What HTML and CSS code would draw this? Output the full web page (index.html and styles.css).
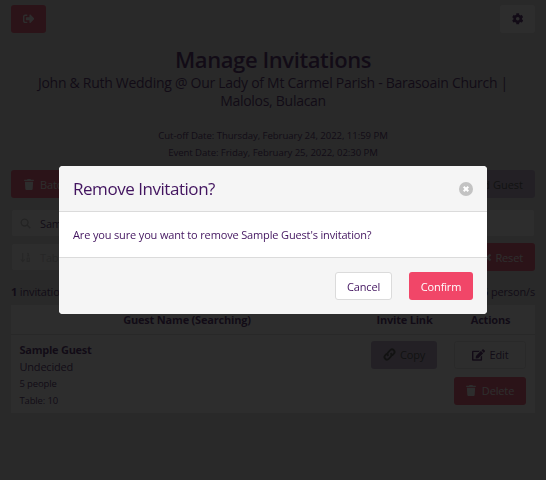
FILE: index.html
```html
<!DOCTYPE html>
<html lang="en">
<head>
<meta charset="utf-8">
<title>Manage Invitations</title>
<link rel="stylesheet" href="styles.css">
</head>
<body>
<svg class="defs" aria-hidden="true">
  <symbol id="trash" viewBox="0 0 448 512"><path d="M32 128h384l-22 340a46 46 0 0 1-46 44H100a46 46 0 0 1-46-44zM432 32H312l-10-19A24 24 0 0 0 281 0H167a24 24 0 0 0-21 13l-10 19H16A16 16 0 0 0 0 48v32a16 16 0 0 0 16 16h416a16 16 0 0 0 16-16V48a16 16 0 0 0-16-16z"/></symbol>
</svg>
<main class="page">
  <div class="row nav">
    <button class="btn danger icon-only"><svg class="i-out" viewBox="0 0 512 512"><path d="M497 273 329 441c-15 15-41 4.500-41-17v-96H152c-13 0-24-11-24-24v-96c0-13 11-24 24-24h136V88c0-21 26-32 41-17l168 168c9 9 9 25 0 34zM192 436v-40c0-7-5-12-12-12H96c-18 0-32-14-32-32V160c0-18 14-32 32-32h84c7 0 12-5 12-12V76c0-7-5-12-12-12H96C43 64 0 107 0 160v192c0 53 43 96 96 96h84c7 0 12-5 12-12z"/></svg></button>
    <button class="btn plain icon-only"><svg class="i-cog" viewBox="0 0 512 512"><path d="M487 316l-42-25c4-23 4-47 0-70l42-25c5-3 7-9 6-14-12-36-31-68-55-95-4-4-10-5-15-2l-43 25c-18-15-39-27-61-35V26c0-6-4-11-10-12-37-8-74-8-109 0-6 1-10 6-10 12v49c-22 8-43 20-61 35L86 85c-5-3-11-2-15 2-25 27-44 59-55 95-2 5 0 11 5 14l43 25c-4 23-4 47 0 70l-43 25c-5 3-7 9-5 14 11 36 30 68 55 95 4 4 10 5 15 2l43-25c18 15 39 27 61 35v49c0 6 4 11 10 12 37 8 74 8 109 0 6-1 10-6 10-12v-49c22-8 43-20 61-35l43 25c5 3 11 2 15-2 25-27 44-59 55-95 1-5-1-11-6-14zM256 336a80 80 0 1 1 0-160 80 80 0 0 1 0 160z" fill-rule="evenodd"/></svg></button>
  </div>
  <header class="heading">
    <h1>Manage Invitations</h1>
    <p class="subtitle">John &amp; Ruth Wedding @ Our Lady of Mt Carmel Parish - Barasoain Church |<br>Malolos, Bulacan</p>
    <p class="dates">Cut-off Date: Thursday, February 24, 2022, 11:59 PM<br>Event Date: Friday, February 25, 2022, 02:30 PM</p>
  </header>
  <div class="row tools">
    <button class="btn danger"><svg class="i-trash"><use href="#trash"/></svg>Batch</button>
    <button class="btn purple add">Add Guest</button>
  </div>
  <div class="field search"><svg class="i-search" viewBox="0 0 24 24"><circle cx="10" cy="10" r="7.500"/><path d="m15.500 15.500 7 7"/></svg>Sample</div>
  <div class="row filters">
    <div class="field sort"><svg class="i-sort" viewBox="0 0 20 20"><path d="M5 2v15M1.500 13.500 5 17.500l3.500-4M15 2v5M13 3l2-1M13 7h4M13 11h4v6h-4z"/></svg>Table</div>
    <button class="btn danger reset"><svg class="i-x" viewBox="0 0 12 12"><path d="m2 2 8 8M10 2l-8 8"/></svg>Reset</button>
  </div>
  <div class="row counts"><span><b>1</b> invitation/s</span><span><b>5</b> person/s</span></div>
  <table>
    <thead><tr><th class="c1">Guest Name (Searching)</th><th class="c2">Invite Link</th><th class="c3">Actions</th></tr></thead>
    <tbody><tr>
      <td><div class="name">Sample Guest</div><div class="state">Undecided</div><div class="small">5 people</div><div class="small">Table: 10</div></td>
      <td><button class="btn purple copy"><svg class="i-link" viewBox="0 0 24 24"><path d="M10 14.500a5 5 0 0 1 0-7L13.500 4a4.600 4.600 0 0 1 6.500 6.500L17 13.500M14 9.500a5 5 0 0 1 0 7L10.500 20A4.600 4.600 0 0 1 4 13.500L7 10.500"/></svg>Copy</button></td>
      <td><button class="btn plain outlined action"><svg class="i-edit" viewBox="0 0 576 512"><path d="m403 84 89 89c4 4 4 10 0 14L276 403l-92 10c-12 1-23-9-21-21l10-92L389 84c4-4 10-4 14 0zm162-23-48-48c-15-15-40-15-55 0l-35 35c-4 4-4 10 0 14l89 89c4 4 10 4 14 0l35-35c15-15 15-40 0-55zM384 346v102H64V128h230c3 0 6-1 8-4l40-40c8-7 3-20-8-20H48c-27 0-48 21-48 48v352c0 27 21 48 48 48h352c27 0 48-21 48-48V306c0-11-13-16-20-8l-40 40c-3 2-4 5-4 8z"/></svg>Edit</button><button class="btn danger action"><svg class="i-trash"><use href="#trash"/></svg>Delete</button></td>
    </tr></tbody>
  </table>
</main>
<div class="overlay">
  <section class="modal" role="dialog">
    <header class="modal-head"><h2>Remove Invitation?</h2><button class="close" aria-label="Close"><svg viewBox="0 0 14 14"><path d="m4.700 4.700 4.600 4.600M9.300 4.700 4.700 9.300"/></svg></button></header>
    <div class="modal-body">Are you sure you want to remove Sample Guest's invitation?</div>
    <footer class="modal-foot"><button class="btn cancel">Cancel</button><button class="btn danger confirm">Confirm</button></footer>
  </section>
</div>
</body>
</html>
```
FILE: styles.css
```css
* { box-sizing: border-box; }
html, body { height: 100%; }
body { margin: 0; overflow: hidden; background: #e0e0e0; color: #42145f; font: 11px/17px "Open Sans", "Noto Sans", sans-serif; letter-spacing: -.15px; }
h1, h2, p { margin: 0; font-weight: 400; }
svg { display: block; flex: none; fill: currentColor; }
.defs { width: 0; height: 0; position: absolute; }
.page { padding: 5px 11px 0; }
.row { display: flex; justify-content: space-between; }
.btn { display: flex; align-items: center; justify-content: center; height: 28px; padding: 0 12px; border: 1px solid transparent; border-radius: 3px; font: inherit; letter-spacing: inherit; color: inherit; white-space: nowrap; }
.danger { background: #f14668; color: #fff; }
.plain { background: #fff; }
.purple { background: #b5a5c6; color: #444; }
.outlined { border-color: #e3e3e3; }
.icon-only { width: 35px; padding: 0; }
.i-out { width: 11.500px; height: 11.500px; }
.i-cog { width: 11.500px; height: 11.500px; }
.i-trash { width: 10px; height: 11px; margin-right: 6px; }
.heading { text-align: center; margin-top: 12px; }
h1 { font-size: 22px; line-height: 28px; font-weight: 600; letter-spacing: -.4px; }
.subtitle { margin-top: 1px; font-size: 14px; line-height: 17.5px; white-space: nowrap; letter-spacing: -.28px; }
.dates { margin-top: 18px; font-size: 9.6px; line-height: 17px; letter-spacing: -.06px; }
.tools { margin-top: 9px; }
.add { padding-right: 11px; letter-spacing: 0; }
.field { display: flex; align-items: center; height: 28px; padding-left: 8px; background: #fff; border: 1px solid #e3e3e3; border-radius: 3px; }
.search { margin-top: 11px; }
.i-search { width: 11px; height: 11px; margin-right: 9px; fill: none; stroke: #b5b5b5; stroke-width: 3; }
.filters { margin-top: 6px; gap: 10px; }
.sort { flex: 1; color: #ccc; }
.i-sort { width: 11px; height: 11px; margin-right: 9px; fill: none; stroke: currentColor; stroke-width: 2; }
.reset { padding-right: 11px; }
.i-x { width: 9px; height: 9px; margin-right: 3px; fill: none; stroke: currentColor; stroke-width: 3; }
.counts { margin-top: 12px; }
table { width: 100%; margin-top: 5px; border-collapse: collapse; table-layout: fixed; background: #fff; }
th { height: 29px; padding: 0; border-bottom: 1px solid #ddd; font-weight: 700; letter-spacing: -.2px; }
.c2 { width: 83px; }
.c3 { width: 89px; }
td { height: 79px; padding: 6px 8px 4px 8px; vertical-align: top; }
td:first-child { padding-left: 8.5px; }
.name { font-weight: 700; line-height: 18px; letter-spacing: -.25px; }
.state { line-height: 16px; letter-spacing: -.2px; }
.small { font-size: 9.5px; line-height: 17px; }
.copy { width: 66px; padding: 0; }
.i-link { width: 13px; height: 13px; margin-right: 4px; fill: none; stroke: currentColor; stroke-width: 3.5; }
.action { width: 72px; padding: 0; }
.action + .action { margin-top: 8px; }
.i-edit { width: 13px; height: 12px; margin-right: 5px; }
.overlay { position: fixed; inset: 0; display: flex; align-items: center; justify-content: center; background: rgba(10, 10, 10, .86); }
.modal { width: 428px; height: 148px; border-radius: 4px; overflow: hidden; background: #fff; }
.modal-head { display: flex; align-items: center; justify-content: space-between; height: 46px; padding: 0 14px; background: #f5f5f5; border-bottom: 1px solid #dbdbdb; }
h2 { font-size: 17px; line-height: 24px; letter-spacing: -.46px; }
.close { width: 14px; height: 14px; padding: 0; border: 0; border-radius: 50%; background: #c3c3c3; color: #fff; }
.close svg { width: 14px; height: 14px; fill: none; stroke: currentColor; stroke-width: 2; }
.modal-body { height: 45px; padding: 14px; line-height: 17px; }
.modal-foot { display: flex; justify-content: flex-end; gap: 17px; height: 57px; padding: 14px 14px 0; background: #f5f5f5; border-top: 1px solid #dbdbdb; }
.cancel { width: 57px; padding: 0; background: #fff; border-color: #dbdbdb; }
.confirm { width: 64px; padding: 0; }
```
